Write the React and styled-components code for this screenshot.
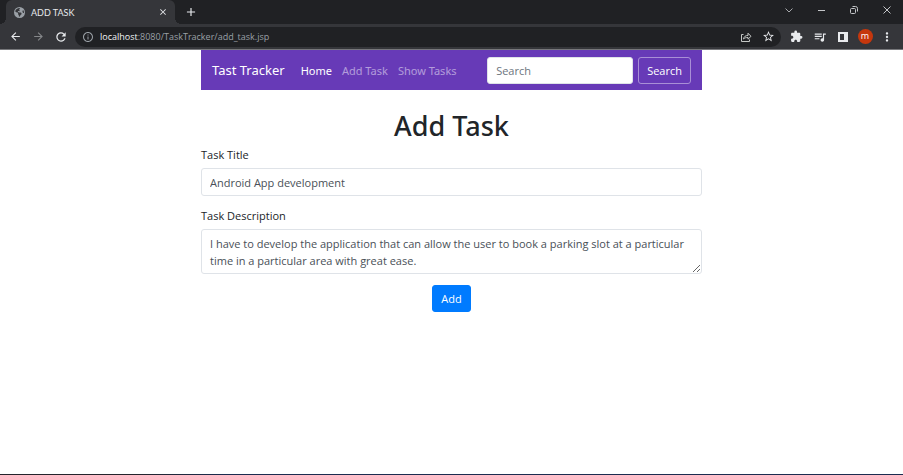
import React from "react";
import styled, { createGlobalStyle } from "styled-components";
import {
  MdClose, MdAdd, MdArrowBack, MdArrowForward, MdRefresh,
  MdInfoOutline, MdStarBorder, MdExtension, MdMoreVert, MdOutlineQueueMusic,
} from "react-icons/md";
import { FaEarthAmericas } from "react-icons/fa6";

const GlobalStyle = createGlobalStyle`
  *, *::before, *::after { box-sizing: border-box; }
  body {
    margin: 0;
    background: #fff;
    color: #212529;
    font-family: "Open Sans", "Noto Sans", sans-serif;
    font-size: 11px;
    line-height: 17px;
  }
  button, input, textarea { font: inherit; }
`;

const Window = styled.div`
  display: flex;
  flex-direction: column;
  min-height: 100vh;
`;

const TabStrip = styled.div`
  display: flex;
  align-items: stretch;
  height: 24px;
  padding-left: 6px;
  background: #202124;
  color: #dee1e6;
`;

const Tab = styled.div`
  position: relative;
  display: flex;
  align-items: center;
  gap: 6px;
  width: 169px;
  padding: 0 6px 0 8px;
  border-radius: 6px 6px 0 0;
  background: #35363a;
  font-family: Lato, "Open Sans", sans-serif;
  font-size: 9px;

  &::before, &::after {
    content: "";
    position: absolute;
    bottom: 0;
    width: 6px;
    height: 6px;
  }
  &::before {
    left: -6px;
    background: radial-gradient(circle at 0 0, #202124 6px, #35363a 6px);
  }
  &::after {
    right: -6px;
    background: radial-gradient(circle at 100% 0, #202124 6px, #35363a 6px);
  }
`;

const TabTitle = styled.span`
  flex: 1;
  color: #e8eaed;
`;

const IconButton = styled.button`
  display: inline-flex;
  align-items: center;
  justify-content: center;
  flex: none;
  width: ${(p) => p.$width || 23}px;
  padding: 0;
  border: 0;
  background: none;
  color: ${(p) => p.$color || "#e8eaed"};
`;

const WindowControls = styled.div`
  display: flex;
  height: 20px;
  margin-left: auto;
`;

const Toolbar = styled.div`
  display: flex;
  align-items: center;
  height: 26px;
  padding: 0 5px 0 4px;
  background: #35363a;
  border-bottom: 1px solid #77787b;
`;

const AddressBar = styled.div`
  display: flex;
  align-items: center;
  flex: 1;
  height: 20px;
  margin: 0 4px 0 3px;
  padding: 0 1px 0 7px;
  border-radius: 10px;
  background: #202124;
  color: #9aa0a6;
`;

const AddressField = styled.label`
  position: relative;
  flex: 1;
  margin-left: 6px;
  font-size: 9px;
`;

const AddressInput = styled.input`
  position: absolute;
  inset: 0;
  width: 100%;
  border: 0;
  padding: 0;
  opacity: 0;
`;

const Host = styled.span`
  color: #f1f3f4;
`;

const Avatar = styled.span`
  display: flex;
  align-items: center;
  justify-content: center;
  width: 15px;
  height: 15px;
  padding-bottom: 1px;
  border-radius: 50%;
  background: #c5370d;
  color: #fff;
  font-size: 9px;
  line-height: 12px;
`;

const Container = styled.main`
  flex: 1;
  width: 100%;
  max-width: 501px;
  margin: 0 auto;
`;

const Navbar = styled.nav`
  display: flex;
  align-items: center;
  height: 40px;
  padding: 0 11px;
  background: #673ab7;
`;

const Brand = styled.a`
  margin-right: 16px;
  color: #fff;
  font-family: "Noto Sans", sans-serif;
  font-size: 13px;
  text-decoration: none;
`;

const NavLinks = styled.div`
  display: flex;
  gap: 10px;
  font-family: "Noto Sans", sans-serif;
`;

const NavLink = styled.a`
  color: ${(p) => (p.$active ? "#fff" : "rgba(255, 255, 255, 0.5)")};
  text-decoration: none;
`;

const SearchForm = styled.form`
  display: flex;
  gap: 5px;
  margin-left: auto;
`;

const Field = styled.input`
  display: block;
  width: 100%;
  height: 28px;
  padding: 5px 8px 4px;
  border: 1px solid #dfe3e8;
  border-radius: 3px;
  background: #fff;
  color: #495057;
  outline: 0;

  &::placeholder { color: #6c757d; opacity: 1; }
`;

const SearchField = styled(Field)`
  width: 146px;
  height: 27px;
  padding: 4px 8px;
`;

const TextArea = styled(Field).attrs({ as: "textarea" })`
  height: 45px;
  resize: vertical;
  overflow: hidden;
`;

const Button = styled.button`
  height: 27px;
  padding: 0 8px;
  border: 1px solid ${(p) => (p.$primary ? "#007bff" : "#a98fd6")};
  border-radius: 3px;
  background: ${(p) => (p.$primary ? "#007bff" : "transparent")};
  color: #fff;
`;

const Heading = styled.h1`
  margin: 18px 0 3px;
  font-family: "Noto Sans", sans-serif;
  font-size: 27px;
  font-weight: 500;
  line-height: 35px;
  text-align: center;
`;

const FormGroup = styled.div`
  margin-bottom: 11px;
`;

const Label = styled.label`
  display: block;
  margin-bottom: 5px;
`;

const Actions = styled.div`
  text-align: center;
`;

const Taskbar = styled.footer`
  height: 1px;
  background: linear-gradient(90deg, #24242c 0 15%, #1b2c50 25% 100%);
`;

const Stroke = ({ size = 10, children, width = 1 }) => (
  <svg width={size} height={size} viewBox={`0 0 ${size} ${size}`} fill="none" stroke="currentColor" strokeWidth={width}>
    {children}
  </svg>
);

export default function App() {
  return (
    <>
      <GlobalStyle />
      <Window>
        <TabStrip>
          <Tab>
            <FaEarthAmericas size={11} color="#9aa0a6" />
            <TabTitle>ADD TASK</TabTitle>
            <IconButton $width={12} aria-label="Close tab"><MdClose size={10} /></IconButton>
          </Tab>
          <IconButton $width={31} aria-label="New tab"><MdAdd size={14} /></IconButton>
          <WindowControls>
            <IconButton $width={32} $color="#a7a9ac" aria-label="Search tabs">
              <Stroke><path d="M1.5 3.5 5 7l3.5-3.5" /></Stroke>
            </IconButton>
            <IconButton $width={32} $color="#c4c6c9" aria-label="Minimize">
              <Stroke><path d="M2 5.5h7" /></Stroke>
            </IconButton>
            <IconButton $width={33} $color="#c4c6c9" aria-label="Restore">
              <Stroke>
                <rect x="1.5" y="3.5" width="5" height="5" rx="1" />
                <path d="M3.5 1.5h3a2 2 0 0 1 2 2v3" />
              </Stroke>
            </IconButton>
            <IconButton $width={33} $color="#c4c6c9" aria-label="Close window">
              <Stroke><path d="m1.5 1.5 7 7m0-7-7 7" /></Stroke>
            </IconButton>
          </WindowControls>
        </TabStrip>

        <Toolbar>
          <IconButton aria-label="Back"><MdArrowBack size={13} /></IconButton>
          <IconButton $color="#85878a" aria-label="Forward"><MdArrowForward size={13} /></IconButton>
          <IconButton $width={22} aria-label="Reload"><MdRefresh size={14} /></IconButton>
          <AddressBar>
            <MdInfoOutline size={12} />
            <AddressField>
              <Host>localhost</Host>:8080/TaskTracker/add_task.jsp
              <AddressInput aria-label="Address" defaultValue="localhost:8080/TaskTracker/add_task.jsp" />
            </AddressField>
            <IconButton $color="#c4c7c5" aria-label="Share">
              <Stroke size={12}>
                <path d="M3.5 3.5h-2v7h8V8.5M3.5 8c.4-2.5 2-3.500 4.500-3.500V2.200L11 5.300 8 8.200V6.500c-2 0-3.300.3-4.500 1.500Z" />
              </Stroke>
            </IconButton>
            <IconButton aria-label="Bookmark"><MdStarBorder size={13} /></IconButton>
          </AddressBar>
          <IconButton aria-label="Extensions"><MdExtension size={13} /></IconButton>
          <IconButton aria-label="Media"><MdOutlineQueueMusic size={14} /></IconButton>
          <IconButton aria-label="Side panel">
            <Stroke size={12} width={2}>
              <path d="M2 2h8v8H2z" />
              <path d="M7 2h3v8H7z" fill="currentColor" stroke="none" />
            </Stroke>
          </IconButton>
          <IconButton $width={22} aria-label="Profile"><Avatar>m</Avatar></IconButton>
          <IconButton $width={22} aria-label="Menu"><MdMoreVert size={14} /></IconButton>
        </Toolbar>

        <Container>
          <Navbar>
            <Brand href="#">Tast Tracker</Brand>
            <NavLinks>
              <NavLink href="#" $active>Home</NavLink>
              <NavLink href="#">Add Task</NavLink>
              <NavLink href="#">Show Tasks</NavLink>
            </NavLinks>
            <SearchForm>
              <SearchField type="search" placeholder="Search" aria-label="Search" />
              <Button type="button">Search</Button>
            </SearchForm>
          </Navbar>

          <Heading>Add Task</Heading>
          <form>
            <FormGroup>
              <Label htmlFor="title">Task Title</Label>
              <Field id="title" type="text" defaultValue="Android App development" />
            </FormGroup>
            <FormGroup>
              <Label htmlFor="description">Task Description</Label>
              <TextArea
                id="description"
                defaultValue="I have to develop the application that can allow the user to book a parking slot at a particular time in a particular area with great ease."
              />
            </FormGroup>
            <Actions>
              <Button type="button" $primary>Add</Button>
            </Actions>
          </form>
        </Container>
        <Taskbar />
      </Window>
    </>
  );
}
